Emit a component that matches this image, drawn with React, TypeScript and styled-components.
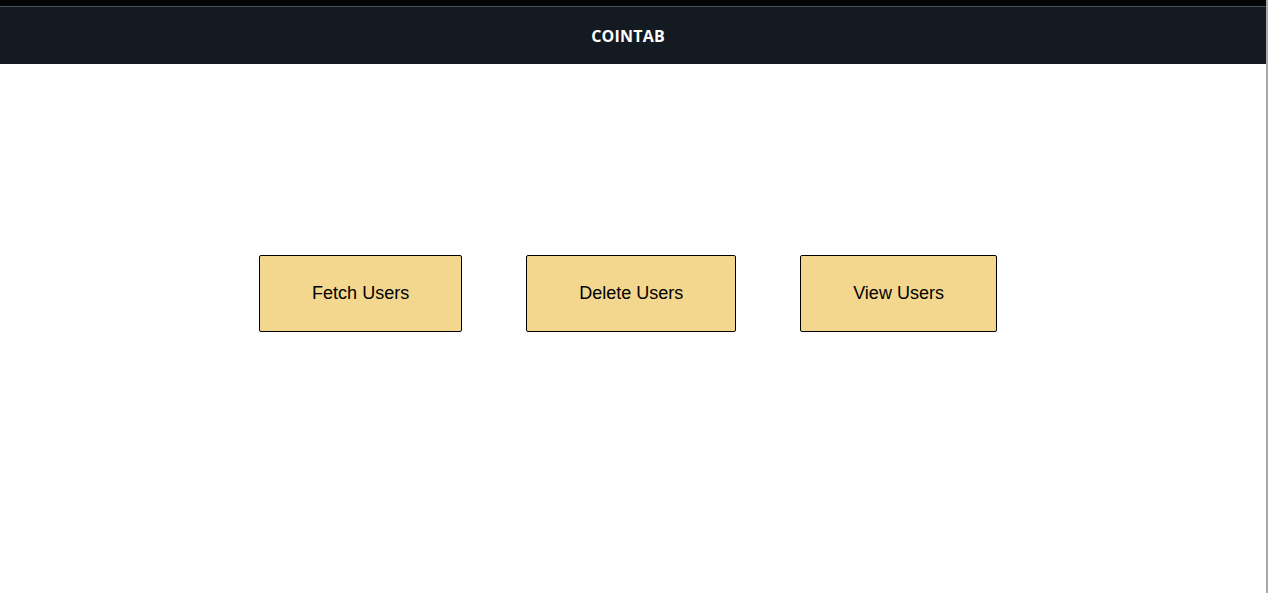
import React from "react";
import styled, { createGlobalStyle } from "styled-components";

const Global = createGlobalStyle`
  html, body { margin: 0; padding: 0; background: #ffffff; }
  body { font-family: "Liberation Sans", Arial, sans-serif; }
`;

const Frame = styled.div`
  width: 1266px;
  height: 593px;
  border-right: 2px solid #a9a9a9;
  box-sizing: content-box;
  display: flex;
  flex-direction: column;
  overflow: hidden;
`;

const Starfield = styled.div`
  height: 6px;
  background: #050507;
  border-bottom: 1px solid #4b5056;
`;

const Navbar = styled.header`
  height: 57px;
  background: #131a21;
  display: flex;
  align-items: center;
  justify-content: center;
  padding-right: 10px;
`;

const Brand = styled.h1`
  margin: 0;
  color: #ffffff;
  font-family: "Open Sans", "Noto Sans", sans-serif;
  font-weight: 700;
  font-size: 16px;
  letter-spacing: 0.2px;
`;

const Main = styled.main`
  display: flex;
  justify-content: center;
  gap: 64px;
  padding: 191px 10px 0 0;
`;

const ActionButton = styled.button`
  height: 77px;
  padding: 0 52px;
  background: #f4d78e;
  border: 1px solid #000000;
  border-radius: 2px;
  font-family: "Liberation Sans", Arial, sans-serif;
  font-size: 18px;
  color: #000000;
  cursor: pointer;
`;

export default function App() {
  return (
    <>
      <Global />
      <Frame>
        <Starfield />
        <Navbar>
          <Brand>COINTAB</Brand>
        </Navbar>
        <Main>
          <ActionButton>Fetch Users</ActionButton>
          <ActionButton>Delete Users</ActionButton>
          <ActionButton>View Users</ActionButton>
        </Main>
      </Frame>
    </>
  );
}
